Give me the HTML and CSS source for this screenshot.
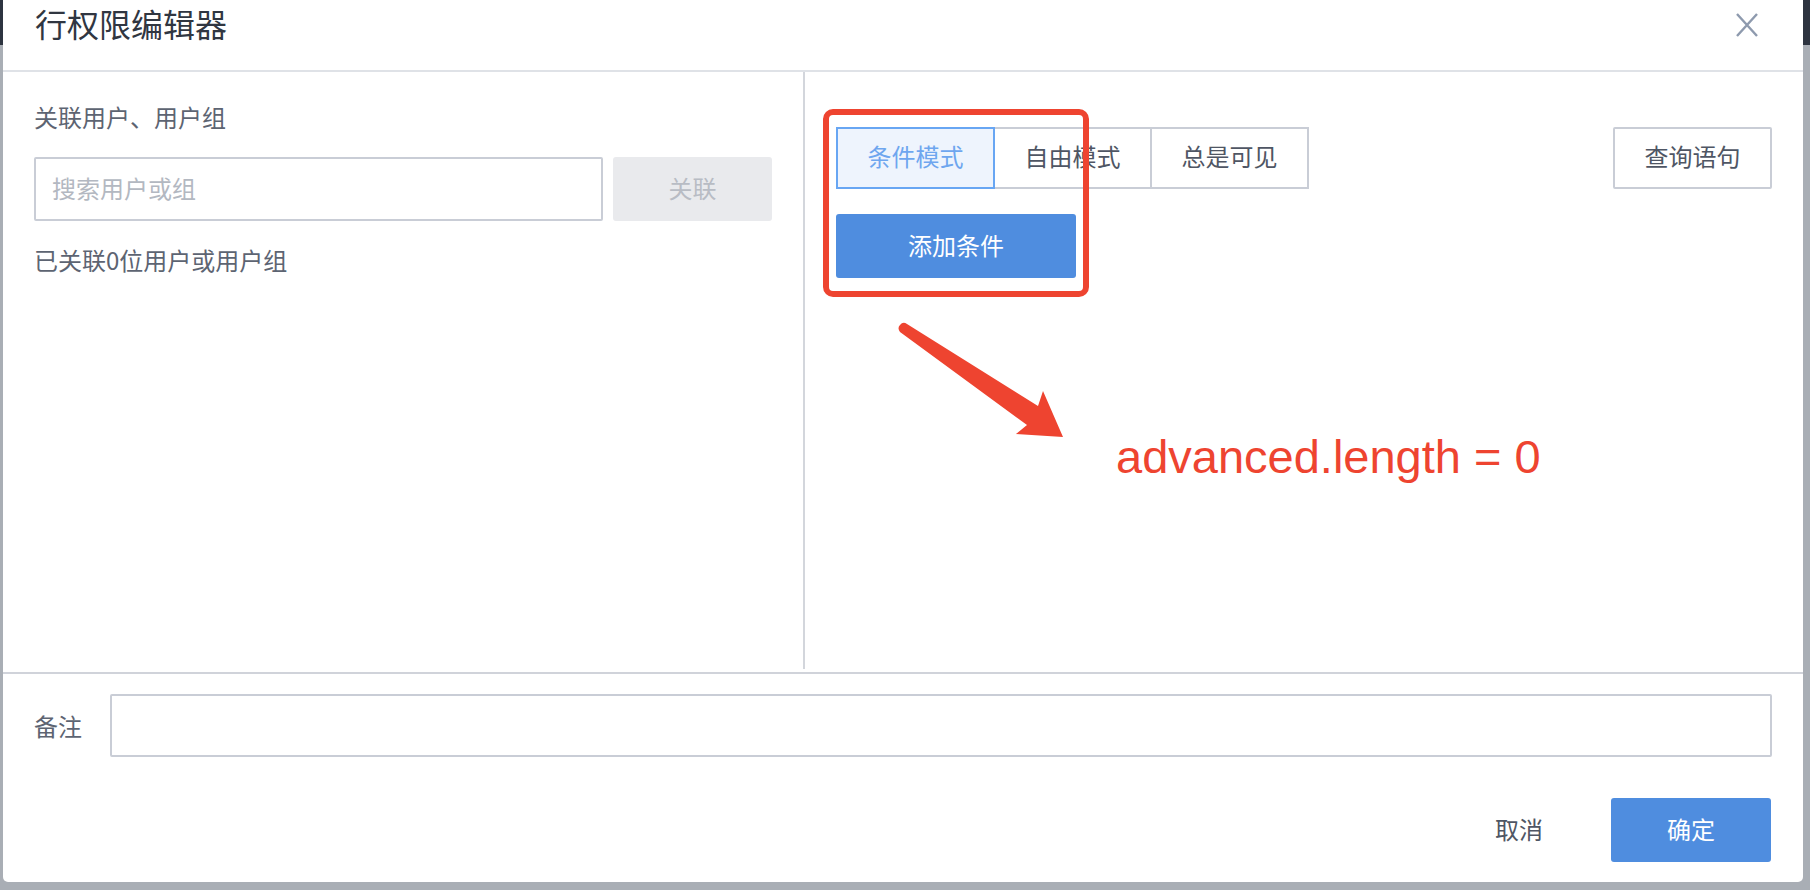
FILE: index.html
```html
<!DOCTYPE html>
<html lang="zh-CN">
<head>
<meta charset="utf-8">
<title>行权限编辑器</title>
<link rel="stylesheet" href="styles.css">
</head>
<body>
<div class="dialog">
  <div class="header">
    <h2 class="title">行权限编辑器</h2>
    <button class="close" aria-label="关闭">
      <svg width="24" height="26" viewBox="0 0 24 26"><path d="M2 2 L22 24 M22 2 L2 24" stroke="#8e9aae" stroke-width="2.4" fill="none"/></svg>
    </button>
  </div>
  <div class="main">
    <div class="left">
      <div class="label">关联用户、用户组</div>
      <div class="search-row">
        <input class="input search" type="text" placeholder="搜索用户或组">
        <button class="btn btn-disabled">关联</button>
      </div>
      <div class="label count">已关联0位用户或用户组</div>
    </div>
    <div class="right">
      <div class="toolbar">
        <div class="tabs">
          <button class="tab active">条件模式</button>
          <button class="tab">自由模式</button>
          <button class="tab">总是可见</button>
        </div>
        <button class="tab query">查询语句</button>
      </div>
      <button class="btn btn-primary add">添加条件</button>
    </div>
  </div>
  <div class="footer">
    <div class="remark-row">
      <span class="remark-label">备注</span>
      <input class="input remark" type="text">
    </div>
    <div class="actions">
      <button class="btn btn-text">取消</button>
      <button class="btn btn-primary ok">确定</button>
    </div>
  </div>

  <div class="mark-box"></div>
  <svg class="mark-arrow" width="1800" height="882" viewBox="0 0 1800 882">
    <path d="M897 325 Q900 321 904 324 L1035 406 L1040 391 L1060 437 L1013 434 L1024 425 L897 332 Q894 328 897 325 Z" fill="#ee4430"/>
  </svg>
  <div class="mark-text">advanced.length = 0</div>
</div>
</body>
</html>
```

FILE: styles.css
```css
* {
  box-sizing: border-box;
}

html, body {
  margin: 0;
  padding: 0;
}

body {
  width: 1810px;
  height: 890px;
  overflow: hidden;
  background: linear-gradient(#2d3440 0, #2d3440 45px, #a9aeb5 45px, #a9aeb5 100%);
  padding-left: 3px;
  font-family: "Noto Sans CJK SC", "Noto Sans", sans-serif;
}

.dialog {
  position: relative;
  width: 1800px;
  height: 882px;
  background: #ffffff;
  border-radius: 0 0 5px 5px;
  display: flex;
  flex-direction: column;
}

.header {
  height: 72px;
  flex: none;
  border-bottom: 2px solid #dfe2e7;
  display: flex;
  justify-content: space-between;
  align-items: flex-start;
  padding: 0 44px 0 32px;
}

.title {
  margin: 0;
  font-size: 32px;
  font-weight: 400;
  line-height: 46px;
  color: #303641;
}

.close {
  margin-top: 12px;
  padding: 0;
  border: 0;
  background: none;
  width: 24px;
  height: 26px;
  display: block;
}

.close svg {
  display: block;
}

.main {
  height: 600px;
  flex: none;
  display: flex;
  align-items: flex-start;
}

.left {
  width: 802px;
  height: 597px;
  border-right: 2px solid #d3d6dc;
  padding: 28px 31px 0 31px;
}

.label {
  font-size: 24px;
  line-height: 34px;
  color: #5d6472;
}

.search-row {
  margin-top: 23px;
  display: flex;
  gap: 10px;
}

.input {
  display: block;
  height: 64px;
  border: 2px solid #c9cdd6;
  border-radius: 2px;
  background: #fff;
  font-family: "Noto Sans CJK SC", "Noto Sans", sans-serif;
  font-size: 24px;
  color: #5d6472;
  padding: 0 16px 4px 16px;
  outline: none;
}

.input::placeholder {
  color: #b3b8c1;
}

.search {
  width: 569px;
}

.btn {
  font-family: "Noto Sans CJK SC", "Noto Sans", sans-serif;
  font-size: 24px;
  border: 0;
  border-radius: 3px;
  padding: 0 0 4px 0;
  height: 64px;
}

.btn-disabled {
  width: 159px;
  background: #e9eaed;
  color: #b8bcc4;
}

.count {
  margin-top: 22px;
}

.right {
  flex: 1;
  padding: 55px 31px 0 31px;
}

.toolbar {
  display: flex;
  justify-content: space-between;
}

.tabs {
  display: flex;
}

.tab {
  position: relative;
  width: 159px;
  height: 62px;
  border: 2px solid #c9cdd6;
  background: #fff;
  font-family: "Noto Sans CJK SC", "Noto Sans", sans-serif;
  font-size: 24px;
  color: #4f5664;
  padding: 0 0 5px 0;
}

.tab + .tab {
  margin-left: -2px;
}

.tab.active {
  z-index: 1;
  border-color: #68a6f3;
  background: #eef4fd;
  color: #6ea6ef;
}

.query {
  border-radius: 2px;
}

.btn-primary {
  background: #4f8ddf;
  color: #ffffff;
}

.add {
  display: block;
  margin-top: 25px;
  width: 240px;
}

.footer {
  flex: 1;
  border-top: 2px solid #d0d3da;
  padding: 20px 31px 20px 31px;
  display: flex;
  flex-direction: column;
}

.remark-row {
  display: flex;
  align-items: center;
}

.remark-label {
  width: 76px;
  flex: none;
  font-size: 24px;
  line-height: 34px;
  color: #5d6472;
}

.remark {
  flex: 1;
  height: 63px;
}

.actions {
  margin-top: 41px;
  display: flex;
  justify-content: flex-end;
  gap: 12px;
  padding-right: 1px;
}

.btn-text {
  width: 160px;
  background: none;
  color: #4f5664;
}

.ok {
  width: 160px;
}

/* annotation overlay */
.mark-box {
  position: absolute;
  left: 820px;
  top: 109px;
  width: 266px;
  height: 188px;
  border: 6px solid #ee4430;
  border-radius: 10px;
  pointer-events: none;
}

.mark-arrow {
  position: absolute;
  left: 0;
  top: 0;
  pointer-events: none;
}

.mark-text {
  position: absolute;
  left: 1113px;
  top: 433px;
  font-family: "Liberation Sans", Arial, sans-serif;
  font-size: 47px;
  line-height: 47px;
  color: #ee4430;
  white-space: nowrap;
}
```
